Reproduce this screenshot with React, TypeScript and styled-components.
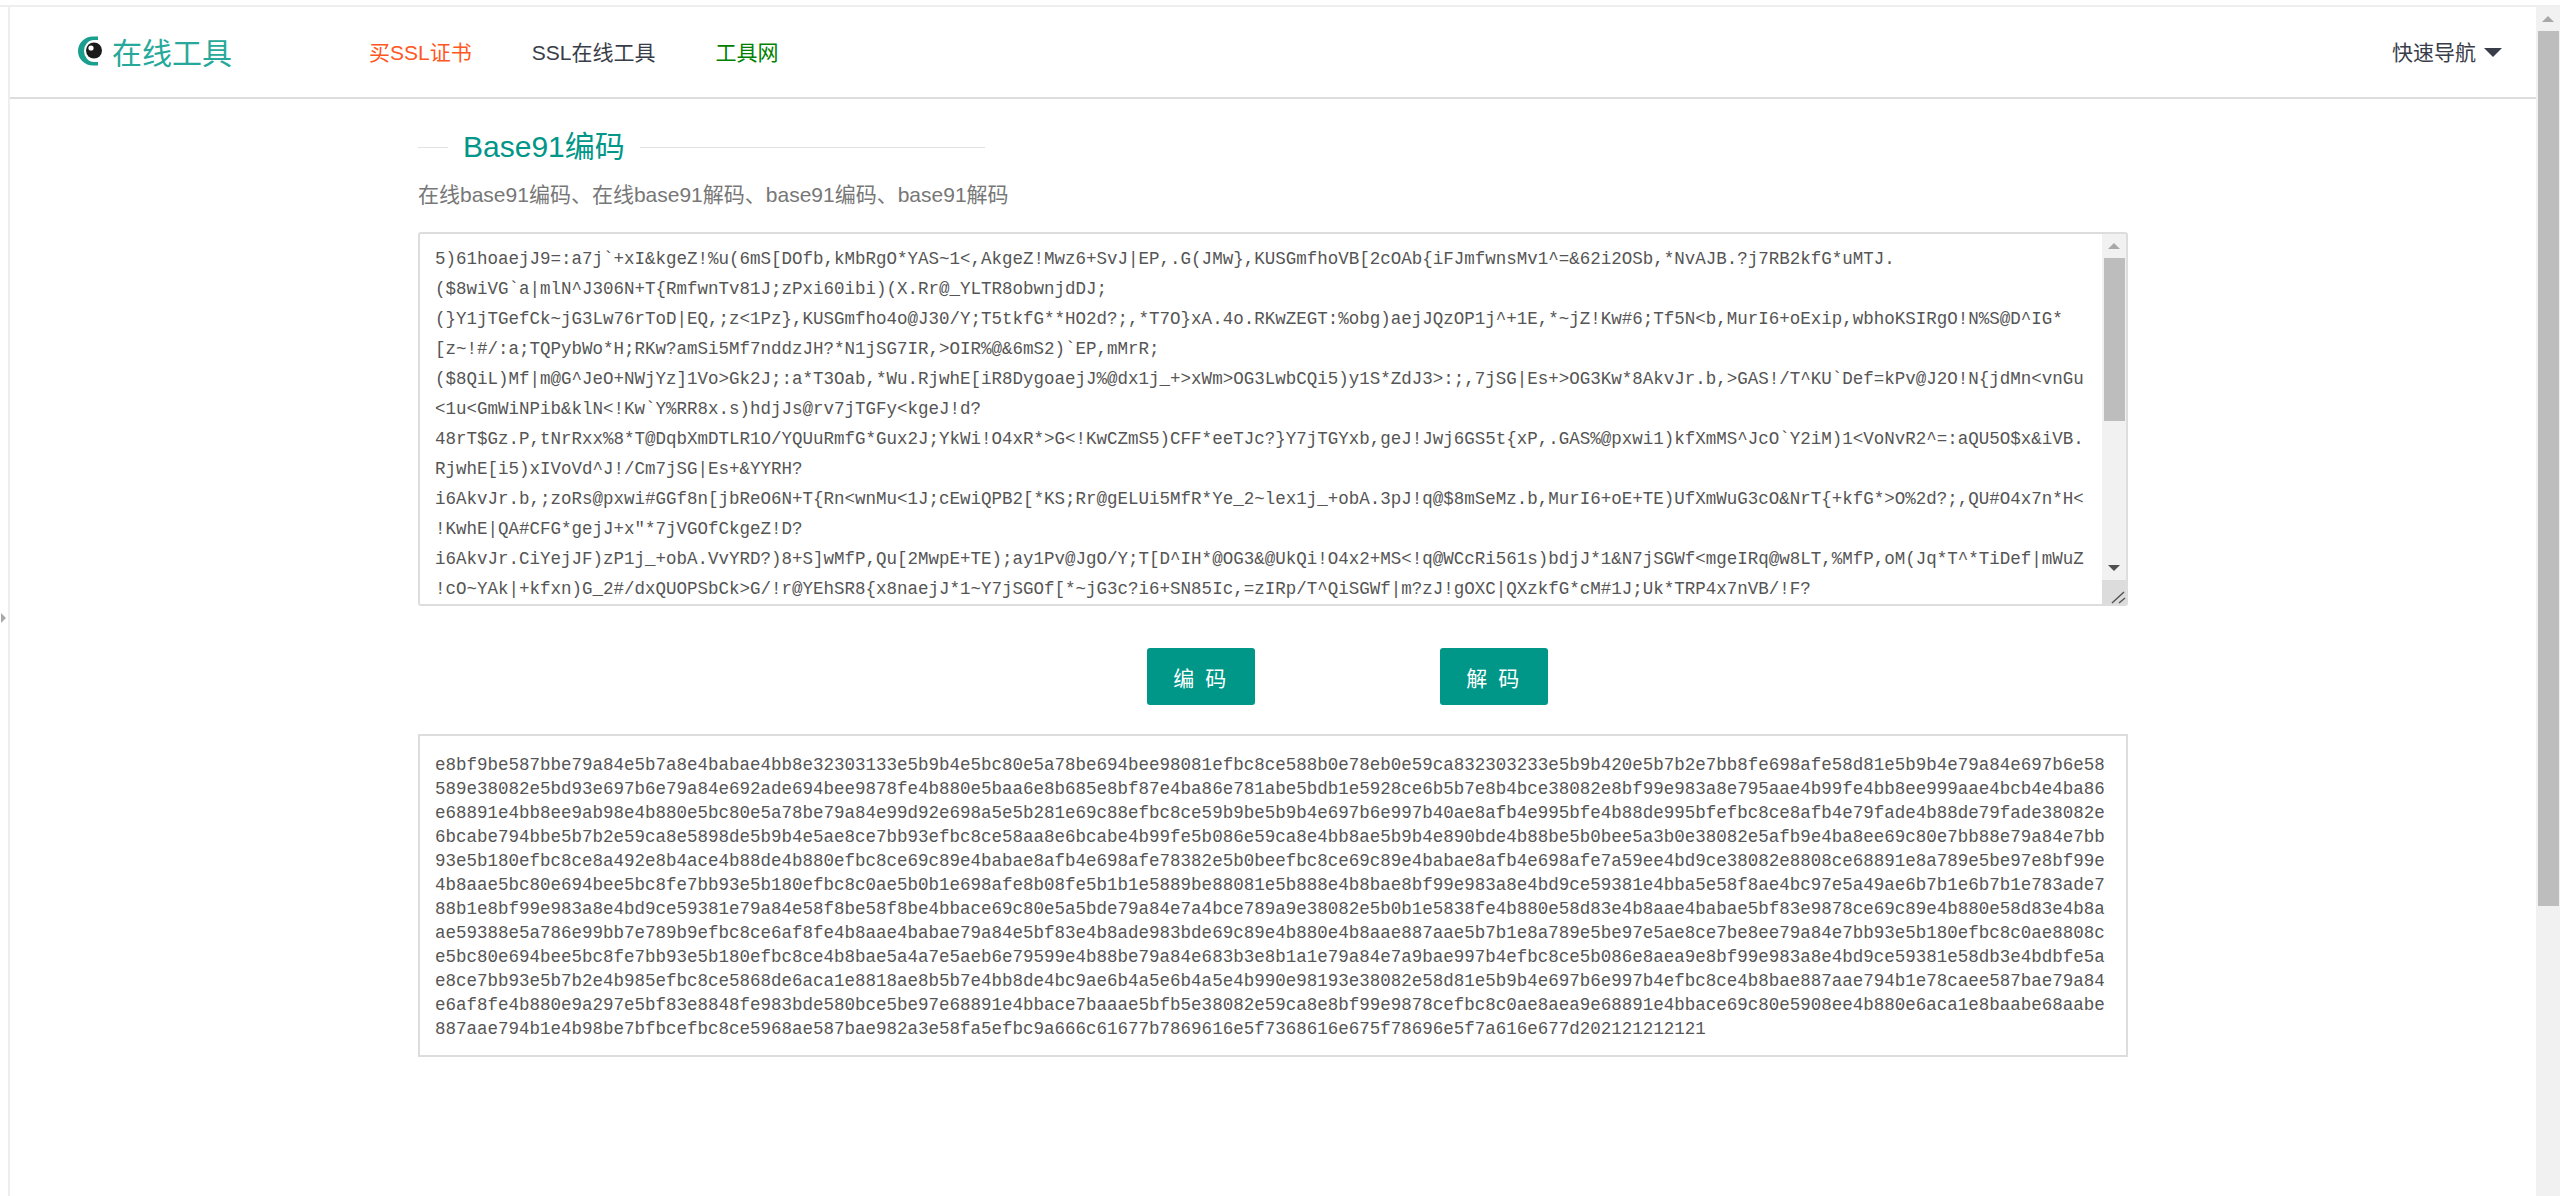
import React from 'react';
import styled, {createGlobalStyle} from 'styled-components';

const SANS = `"Liberation Sans", "Noto Sans CJK SC", sans-serif`;
const MONO = `"Liberation Mono", "Noto Sans CJK SC", monospace`;

const encoded = [
    '5)61hoaejJ9=:a7j`+xI&kgeZ!%u(6mS[DOfb,kMbRgO*YAS~1<,AkgeZ!Mwz6+SvJ|EP,.G(JMw},KUSGmfhoVB[2cOAb{iFJmfwnsMv1^=&62i2OSb,*NvAJB.?j7RB2kfG*uMTJ.',
    '($8wiVG`a|mlN^J306N+T{RmfwnTv81J;zPxi60ibi)(X.Rr@_YLTR8obwnjdDJ;',
    '(}Y1jTGefCk~jG3Lw76rToD|EQ,;z<1Pz},KUSGmfho4o@J30/Y;T5tkfG**HO2d?;,*T7O}xA.4o.RKwZEGT:%obg)aejJQzOP1j^+1E,*~jZ!Kw#6;Tf5N<b,MurI6+oExip,wbhoKSIRgO!N%S@D^IG*',
    '[z~!#/:a;TQPybWo*H;RKw?amSi5Mf7nddzJH?*N1jSG7IR,>OIR%@&6mS2)`EP,mMrR;',
    '($8QiL)Mf|m@G^JeO+NWjYz]1Vo>Gk2J;:a*T3Oab,*Wu.RjwhE[iR8DygoaejJ%@dx1j_+>xWm>OG3LwbCQi5)y1S*ZdJ3>:;,7jSG|Es+>OG3Kw*8AkvJr.b,>GAS!/T^KU`Def=kPv@J2O!N{jdMn<vnGu',
    '<1u<GmWiNPib&klN<!Kw`Y%RR8x.s)hdjJs@rv7jTGFy<kgeJ!d?',
    '48rT$Gz.P,tNrRxx%8*T@DqbXmDTLR1O/YQUuRmfG*Gux2J;YkWi!O4xR*>G<!KwCZmS5)CFF*eeTJc?}Y7jTGYxb,geJ!Jwj6GS5t{xP,.GAS%@pxwi1)kfXmMS^JcO`Y2iM)1<VoNvR2^=:aQU5O$x&iVB.',
    'RjwhE[i5)xIVoVd^J!/Cm7jSG|Es+&YYRH?',
    'i6AkvJr.b,;zoRs@pxwi#GGf8n[jbReO6N+T{Rn<wnMu<1J;cEwiQPB2[*KS;Rr@gELUi5MfR*Ye_2~lex1j_+obA.3pJ!q@$8mSeMz.b,MurI6+oE+TE)UfXmWuG3cO&NrT{+kfG*>O%2d?;,QU#O4x7n*H<',
    '!KwhE|QA#CFG*gejJ+x"*7jVGOfCkgeZ!D?',
    'i6AkvJr.CiYejJF)zP1j_+obA.VvYRD?)8+S]wMfP,Qu[2MwpE+TE);ay1Pv@JgO/Y;T[D^IH*@OG3&@UkQi!O4x2+MS<!q@WCcRi561s)bdjJ*1&N7jSGWf<mgeIRq@w8LT,%MfP,oM(Jq*T^*TiDef|mWuZ',
    '!cO~YAk|+kfxn)G_2#/dxQUOPSbCk>G/!r@YEhSR8{x8naejJ*1~Y7jSGOf[*~jG3c?i6+SN85Ic,=zIRp/T^QiSGWf|m?zJ!gOXC|QXzkfG*cM#1J;Uk*TRP4x7nVB/!F?',
];

const decodedHex = [
    'e8bf9be587bbe79a84e5b7a8e4babae4bb8e32303133e5b9b4e5bc80e5a78be694bee98081efbc8ce588b0e78eb0e59ca832303233e5b9b420e5b7b2e7bb8fe698afe58d81e5b9b4e79a84e697b6e58',
    '589e38082e5bd93e697b6e79a84e692ade694bee9878fe4b880e5baa6e8b685e8bf87e4ba86e781abe5bdb1e5928ce6b5b7e8b4bce38082e8bf99e983a8e795aae4b99fe4bb8ee999aae4bcb4e4ba86',
    'e68891e4bb8ee9ab98e4b880e5bc80e5a78be79a84e99d92e698a5e5b281e69c88efbc8ce59b9be5b9b4e697b6e997b40ae8afb4e995bfe4b88de995bfefbc8ce8afb4e79fade4b88de79fade38082e',
    '6bcabe794bbe5b7b2e59ca8e5898de5b9b4e5ae8ce7bb93efbc8ce58aa8e6bcabe4b99fe5b086e59ca8e4bb8ae5b9b4e890bde4b88be5b0bee5a3b0e38082e5afb9e4ba8ee69c80e7bb88e79a84e7bb',
    '93e5b180efbc8ce8a492e8b4ace4b88de4b880efbc8ce69c89e4babae8afb4e698afe78382e5b0beefbc8ce69c89e4babae8afb4e698afe7a59ee4bd9ce38082e8808ce68891e8a789e5be97e8bf99e',
    '4b8aae5bc80e694bee5bc8fe7bb93e5b180efbc8c0ae5b0b1e698afe8b08fe5b1b1e5889be88081e5b888e4b8bae8bf99e983a8e4bd9ce59381e4bba5e58f8ae4bc97e5a49ae6b7b1e6b7b1e783ade7',
    '88b1e8bf99e983a8e4bd9ce59381e79a84e58f8be58f8be4bbace69c80e5a5bde79a84e7a4bce789a9e38082e5b0b1e5838fe4b880e58d83e4b8aae4babae5bf83e9878ce69c89e4b880e58d83e4b8a',
    'ae59388e5a786e99bb7e789b9efbc8ce6af8fe4b8aae4babae79a84e5bf83e4b8ade983bde69c89e4b880e4b8aae887aae5b7b1e8a789e5be97e5ae8ce7be8ee79a84e7bb93e5b180efbc8c0ae8808c',
    'e5bc80e694bee5bc8fe7bb93e5b180efbc8ce4b8bae5a4a7e5aeb6e79599e4b88be79a84e683b3e8b1a1e79a84e7a9bae997b4efbc8ce5b086e8aea9e8bf99e983a8e4bd9ce59381e58db3e4bdbfe5a',
    'e8ce7bb93e5b7b2e4b985efbc8ce5868de6aca1e8818ae8b5b7e4bb8de4bc9ae6b4a5e6b4a5e4b990e98193e38082e58d81e5b9b4e697b6e997b4efbc8ce4b8bae887aae794b1e78caee587bae79a84',
    'e6af8fe4b880e9a297e5bf83e8848fe983bde580bce5be97e68891e4bbace7baaae5bfb5e38082e59ca8e8bf99e9878cefbc8c0ae8aea9e68891e4bbace69c80e5908ee4b880e6aca1e8baabe68aabe',
    '887aae794b1e4b98be7bfbcefbc8ce5968ae587bae982a3e58fa5efbc9a666c61677b7869616e5f7368616e675f78696e5f7a616e677d202121212121',
];

const navLinks = [
    {label: '买SSL证书', color: '#ff5722'},
    {label: 'SSL在线工具', color: '#393D49'},
    {label: '工具网', color: '#008000'},
];

const GlobalStyle = createGlobalStyle`
  html, body {
    margin: 0;
    height: 100%;
    overflow: hidden;
    background: #fff;
  }
`;

const Shell = styled.div`
  height: 100vh;
  box-sizing: border-box;
  padding-top: 5px;
  display: flex;
  flex-direction: column;
  font-family: ${SANS};
`;

const Frame = styled.div`
  flex: 1;
  min-height: 0;
  display: flex;
  border-top: 2px solid #eee;
`;

const SideRail = styled.div`
  position: relative;
  width: 8px;
  flex: none;
`;

const RailHandle = styled.span`
  position: absolute;
  left: 1px;
  top: 606px;
  width: 0;
  height: 0;
  border-style: solid;
  border-width: 5px 0 5px 5px;
  border-color: transparent transparent transparent #a8a8a8;
`;

const PageArea = styled.div`
  flex: 1;
  min-width: 0;
  overflow: hidden;
  border-left: 2px solid #eee;
`;

// the headless browser hides native scrollbars, so they are drawn as parts of the page
const ScrollBar = styled.div`
  width: 24px;
  flex: none;
  display: flex;
  flex-direction: column;
  background: #f1f1f1;
`;

const ArrowCell = styled.div`
  height: 24px;
  flex: none;
  display: flex;
  align-items: center;
  justify-content: center;
`;

const Arrow = styled.span<{ $down?: boolean; $color: string }>`
  width: 0;
  height: 0;
  border-style: solid;
  border-color: transparent;
  border-width: ${p => (p.$down ? '6px 6px 0 6px' : '0 6px 6px 6px')};
  border-${p => (p.$down ? 'top' : 'bottom')}-color: ${p => p.$color};
`;

const Thumb = styled.div<{ $height: number }>`
  height: ${p => p.$height}px;
  flex: none;
  margin: 0 1px 0 2px;
  background: #bdbdbd;
`;

const TrackGap = styled.div`
  flex: 1;
`;

const GripCorner = styled.div`
  height: 24px;
  flex: none;
  background: #dcdcdc;
`;

const Header = styled.header`
  height: 88px;
  display: flex;
  align-items: center;
  padding: 0 34px 2px 67px;
  border-bottom: 2px solid #ddd;
`;

const Logo = styled.div`
  display: flex;
  align-items: center;
  gap: 10px;
  width: 292px;
  flex: none;
  color: #26a99a;
  font-size: 30px;
`;

const Nav = styled.nav`
  display: flex;
  gap: 60px;
  flex: 1;
`;

const NavLink = styled.a<{ $color: string }>`
  color: ${p => p.$color};
  font-size: 21px;
  text-decoration: none;
`;

const QuickNav = styled.div`
  display: flex;
  align-items: center;
  gap: 8px;
  color: #393D49;
  font-size: 21px;
`;

const Caret = styled.span`
  width: 0;
  height: 0;
  margin-top: 3px;
  border-style: solid;
  border-width: 9px 9px 0 9px;
  border-color: #393D49 transparent transparent transparent;
`;

const Content = styled.main`
  width: 1710px;
  margin-left: 408px;
  padding-top: 24px;
`;

const TitleRow = styled.div`
  width: 567px;
  height: 48px;
  display: flex;
  align-items: center;
  gap: 15px;
`;

const TitleRule = styled.span<{ $grow?: boolean }>`
  height: 1px;
  background: #e2e2e2;
  flex: ${p => (p.$grow ? '1' : '0 0 30px')};
`;

const Title = styled.h1`
  margin: 0;
  color: #009688;
  font-size: 30px;
  font-weight: 400;
  line-height: 48px;
`;

const Subtitle = styled.p`
  margin: 9px 0 22px;
  color: #777;
  font-size: 21px;
  line-height: 30px;
`;

const SourceField = styled.div`
  height: 374px;
  box-sizing: border-box;
  display: flex;
  border: 2px solid #ddd;
  border-radius: 3px;
  overflow: hidden;
`;

const SourceInput = styled.textarea`
  flex: 1;
  min-width: 0;
  box-sizing: border-box;
  padding: 10px 15px;
  border: none;
  outline: none;
  color: #555;
  font-family: ${MONO};
  font-size: 17.5px;
  line-height: 30px;
  white-space: pre;
  overflow: hidden;
  resize: none;
`;

const ActionRow = styled.div`
  display: flex;
  gap: 185px;
  padding: 42px 0 29px 729px;
`;

const ActionButton = styled.button`
  width: 108px;
  height: 57px;
  padding: 0;
  border: none;
  border-radius: 3px;
  background: #009688;
  color: #fff;
  font-family: ${SANS};
  font-size: 21px;
  letter-spacing: 2.6px;
  white-space: pre;
`;

const OutputBox = styled.div`
  box-sizing: border-box;
  height: 323px;
  padding: 17px 15px;
  border: 2px solid #ddd;
  color: #555;
  font-family: ${MONO};
  font-size: 17.5px;
  line-height: 24px;
  white-space: pre;
`;

const LogoMark = () => (
    <svg width="25" height="30" viewBox="0 0 25 30">
        <path d="M21 .5H16A15 14.5 0 0 0 16 29.5H21V26H17A10 11 0 0 1 17 4H21Z" fill="#1a9e8d"/>
        <circle cx="17" cy="14.5" r="8" fill="#1a1a1a"/>
        <circle cx="14" cy="12" r="2.6" fill="#fff"/>
    </svg>
);

const GripLines = () => (
    <svg width="24" height="24" viewBox="0 0 24 24">
        <path d="M10 23 22 12M17 23 23 18" stroke="#555" strokeWidth="1.5" fill="none"/>
    </svg>
);

export default function App() {
    return (
        <Shell>
            <GlobalStyle/>
            <Frame>
                <SideRail><RailHandle/></SideRail>
                <PageArea>
                    <Header>
                        <Logo><LogoMark/>在线工具</Logo>
                        <Nav>
                            {navLinks.map(link => (
                                <NavLink key={link.label} $color={link.color} href="#">{link.label}</NavLink>
                            ))}
                        </Nav>
                        <QuickNav>快速导航<Caret/></QuickNav>
                    </Header>
                    <Content>
                        <TitleRow>
                            <TitleRule/>
                            <Title>Base91编码</Title>
                            <TitleRule $grow/>
                        </TitleRow>
                        <Subtitle>在线base91编码、在线base91解码、base91编码、base91解码</Subtitle>
                        <SourceField>
                            <SourceInput wrap="off" defaultValue={encoded.join('\n')} spellCheck={false}/>
                            <ScrollBar>
                                <ArrowCell><Arrow $color="#a8a8a8"/></ArrowCell>
                                <Thumb $height={163}/>
                                <TrackGap/>
                                <ArrowCell><Arrow $down $color="#505050"/></ArrowCell>
                                <GripCorner><GripLines/></GripCorner>
                            </ScrollBar>
                        </SourceField>
                        <ActionRow>
                            <ActionButton>编 码</ActionButton>
                            <ActionButton>解 码</ActionButton>
                        </ActionRow>
                        <OutputBox>{decodedHex.join('\n')}</OutputBox>
                    </Content>
                </PageArea>
                <ScrollBar>
                    <ArrowCell><Arrow $color="#a8a8a8"/></ArrowCell>
                    <Thumb $height={875}/>
                    <TrackGap/>
                </ScrollBar>
            </Frame>
        </Shell>
    );
}
